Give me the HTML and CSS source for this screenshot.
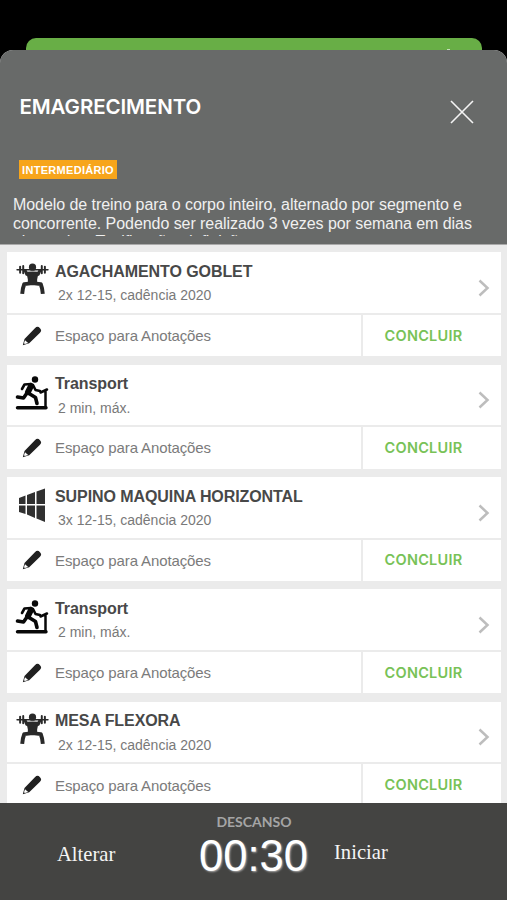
FILE: index.html
```html
<!DOCTYPE html>
<html lang="pt-BR">
<head>
<meta charset="utf-8">
<meta name="viewport" content="width=device-width, initial-scale=1">
<title>Emagrecimento</title>
<link rel="stylesheet" href="styles.css">
</head>
<body>
<svg class="symbols" aria-hidden="true">
  <symbol id="squat" viewBox="0 0 32 32">
    <g fill="none" stroke="#292929" stroke-linecap="round" stroke-linejoin="round">
      <path stroke-width="1.400" d="M1 6.500H31"/>
      <path stroke-width="1.900" d="M4 3.500v6M7 3v7M25 3v7M28 3.500v6"/>
      <path stroke-width="3" d="M9 7.500l1.500 3.500 3 1M23 7.500l-1.500 3.500-3 1"/>
      <path stroke-width="3.800" stroke-linecap="butt" d="M16 19.500L8 20.500Q6.500 24 6 30M16 19.500l8 1q1.500 3.500 2 9.500"/>
    </g>
    <circle cx="16" cy="4" r="3.500" fill="#292929"/>
    <path fill="#292929" d="M10 8.500Q16 8 22 8.500L20.500 16v5h-9v-5z"/>
  </symbol>
  <symbol id="treadmill" viewBox="0 0 34 34">
    <circle cx="20" cy="3.500" r="3.200" fill="#080808"/>
    <g fill="none" stroke="#080808" stroke-linecap="round" stroke-linejoin="round">
      <path stroke-width="2.600" d="M16 8L9.500 8.500 7 13M18 9l2.500 5 4.500 1"/>
      <path stroke-width="6" d="M16 10L13 16"/>
      <path stroke-width="3.600" d="M12 17l-3.500 5-6-1M14 17.500l6.500 4 1.500 6"/>
      <path stroke-width="2.500" d="M25.500 16.500l6.500-3M30.500 15.500V31"/>
      <path stroke-width="3.400" d="M2.500 31.800H31"/>
    </g>
  </symbol>
  <symbol id="machine" viewBox="0 0 28 34">
    <path fill="#303030" d="M1 10l6.500-2.500V16H1zM9 7l8-3v12H9zM18.500 3.500L27 .5V16h-8.500zM1 17.500h6.500V26L1 24zM9 17.500h8V30l-8-3.500zM18.500 17.500H27V34l-8.500-3.500z"/>
  </symbol>
  <symbol id="pencil" viewBox="0 0 20 20">
    <path fill="#202020" d="M.8 19.200l1.700-6.100L12.900 2.300Q15.500-.5 18 2.200q2.300 2.300 0 4.500L7.200 17.300z"/>
    <path fill="#fff" d="M3 14.200l3.200 2.900-3.300 1-.9-.8z"/>
  </symbol>
  <symbol id="chevron" viewBox="0 0 12 18">
    <path fill="none" stroke="#bdbdbd" stroke-width="2.500" d="M1.500 1.500L9.500 9l-8 7.500"/>
  </symbol>
</svg>
<div class="phone">
  <div class="behind"><span class="fleck"></span></div>
  <main class="sheet">
    <header class="header">
      <div class="title-row">
        <h1 class="title">EMAGRECIMENTO</h1>
        <svg class="close" viewBox="0 0 24 24"><path d="M1 1l22 22M23 1L1 23" fill="none" stroke="#f4f4f4" stroke-width="1.600"/></svg>
      </div>
      <span class="level">INTERMEDIÁRIO</span>
      <p class="description">Modelo de treino para o corpo inteiro, alternado por segmento e<br>concorrente. Podendo ser realizado 3 vezes por semana em dias<br>alternados. Tonificação, definição</p>
    </header>
    <section class="list">
      <article class="card">
        <div class="exercise"><svg class="icon squat"><use href="#squat"/></svg><div class="info"><h2 class="name">AGACHAMENTO GOBLET</h2><p class="detail">2x 12-15, cadência 2020</p></div><svg class="chevron"><use href="#chevron"/></svg></div>
        <div class="actions"><div class="notes"><svg class="pencil"><use href="#pencil"/></svg><span>Espaço para Anotações</span></div><div class="finish">CONCLUIR</div></div>
      </article>
      <article class="card">
        <div class="exercise"><svg class="icon treadmill"><use href="#treadmill"/></svg><div class="info"><h2 class="name">Transport</h2><p class="detail">2 min, máx.</p></div><svg class="chevron"><use href="#chevron"/></svg></div>
        <div class="actions"><div class="notes"><svg class="pencil"><use href="#pencil"/></svg><span>Espaço para Anotações</span></div><div class="finish">CONCLUIR</div></div>
      </article>
      <article class="card">
        <div class="exercise"><svg class="icon machine"><use href="#machine"/></svg><div class="info"><h2 class="name">SUPINO MAQUINA HORIZONTAL</h2><p class="detail">3x 12-15, cadência 2020</p></div><svg class="chevron"><use href="#chevron"/></svg></div>
        <div class="actions"><div class="notes"><svg class="pencil"><use href="#pencil"/></svg><span>Espaço para Anotações</span></div><div class="finish">CONCLUIR</div></div>
      </article>
      <article class="card">
        <div class="exercise"><svg class="icon treadmill"><use href="#treadmill"/></svg><div class="info"><h2 class="name">Transport</h2><p class="detail">2 min, máx.</p></div><svg class="chevron"><use href="#chevron"/></svg></div>
        <div class="actions"><div class="notes"><svg class="pencil"><use href="#pencil"/></svg><span>Espaço para Anotações</span></div><div class="finish">CONCLUIR</div></div>
      </article>
      <article class="card">
        <div class="exercise"><svg class="icon squat"><use href="#squat"/></svg><div class="info"><h2 class="name">MESA FLEXORA</h2><p class="detail">2x 12-15, cadência 2020</p></div><svg class="chevron"><use href="#chevron"/></svg></div>
        <div class="actions"><div class="notes"><svg class="pencil"><use href="#pencil"/></svg><span>Espaço para Anotações</span></div><div class="finish">CONCLUIR</div></div>
      </article>
    </section>
    <footer class="timer">
      <div class="change">Alterar</div>
      <div class="clock"><div class="rest">DESCANSO</div><div class="time">00:30</div></div>
      <div class="start">Iniciar</div>
    </footer>
  </main>
</div>
</body>
</html>
```
FILE: styles.css
```css
* { box-sizing: border-box; }
body { margin: 0; background: #000; font-family: "Liberation Sans", Arial, sans-serif; }
h1, h2, p { margin: 0; }
svg { display: block; flex: none; }
.symbols { display: none; }
.phone { width: 507px; height: 900px; overflow: hidden; padding-top: 38px; display: flex; flex-direction: column; }
.behind { height: 12px; flex: none; margin: 0 25px 0 26px; padding-right: 32px; display: flex; justify-content: flex-end; align-items: flex-end; background: #68ae46; border-radius: 10px 10px 0 0; }
.fleck { width: 3px; height: 1px; background: #c5dfb8; }
.sheet { height: 850px; flex: none; display: flex; flex-direction: column; overflow: hidden; border-radius: 13px 13px 0 0; background: #ebebeb; }
.header { height: 195px; flex: none; background: #686a69; border-bottom: 1px solid #aaa; color: #f0f0f0; overflow: hidden; }
.title-row { display: flex; justify-content: space-between; height: 110px; padding: 44px 33px 0 19.500px; }
.title { font: 600 20.500px/25px Inter, sans-serif; letter-spacing: -.1px; color: #fff; white-space: nowrap; }
.close { width: 24px; height: 24px; margin-top: 6px; }
.level { display: block; width: 98px; height: 19px; margin-left: 19px; background: #f7a51b; color: #fff; font: bold 11px/20px "Liberation Sans", sans-serif; text-align: center; letter-spacing: .3px; }
.description { height: 40px; margin: 17px 0 0 13px; overflow: hidden; white-space: nowrap; font-size: 16px; line-height: 18.500px; letter-spacing: -.06px; }
.list { height: 558px; flex: none; padding: 7.300px 6px 0 7px; overflow: hidden; display: flex; flex-direction: column; gap: 8.400px; }
.card { height: 104px; flex: none; display: flex; flex-direction: column; gap: 2px; }
.exercise { height: 60.500px; display: flex; background: #fff; padding: 0 11px 0 8px; }
.icon { margin-right: 7px; }
.squat { width: 33px; height: 33px; margin: 11px 6px 0 1px; }
.treadmill { width: 34px; height: 34px; margin-top: 11px; margin-right: 6px; }
.machine { width: 28px; height: 34px; margin: 11px 9px 0 3px; }
.info { flex: 1; padding-top: 10.500px; }
.name { font-size: 16px; line-height: 18px; color: #484848; letter-spacing: -.08px; white-space: nowrap; }
.detail { margin: 6.500px 0 0 3px; font-size: 14px; line-height: 16px; color: #797979; white-space: nowrap; }
.chevron { width: 12px; height: 18px; margin-top: 26.500px; }
.actions { height: 41.500px; display: flex; gap: 2px; }
.notes { width: 354px; background: #fff; display: flex; align-items: center; padding-left: 15px; font-size: 15px; color: #7b7b7b; letter-spacing: -.12px; }
.pencil { width: 20px; height: 20px; margin-right: 13px; }
.finish { flex: 1; background: #fff; padding: 0 17px 1px 0; display: flex; align-items: center; justify-content: center; color: #78c257; font: 600 14.500px Inter, sans-serif; letter-spacing: .25px; }
.timer { height: 97px; flex: none; display: flex; background: #444442; color: #f5f5f5; }
.change, .start { font: 20.600px/24px "Liberation Serif", serif; }
.change { width: 140px; padding: 39px 0 0 57px; margin-right: 55px; }
.clock { width: 117px; padding-top: 10px; text-align: center; white-space: nowrap; }
.rest { font: bold 14px/18px Lato, sans-serif; color: #a5a5a5; margin-left: 1px; }
.time { margin-top: 3px; font-size: 43.500px; line-height: 44px; color: #fff; text-shadow: 1px 1px 2px #aaa; }
.start { padding: 37px 0 0 22px; }
```
